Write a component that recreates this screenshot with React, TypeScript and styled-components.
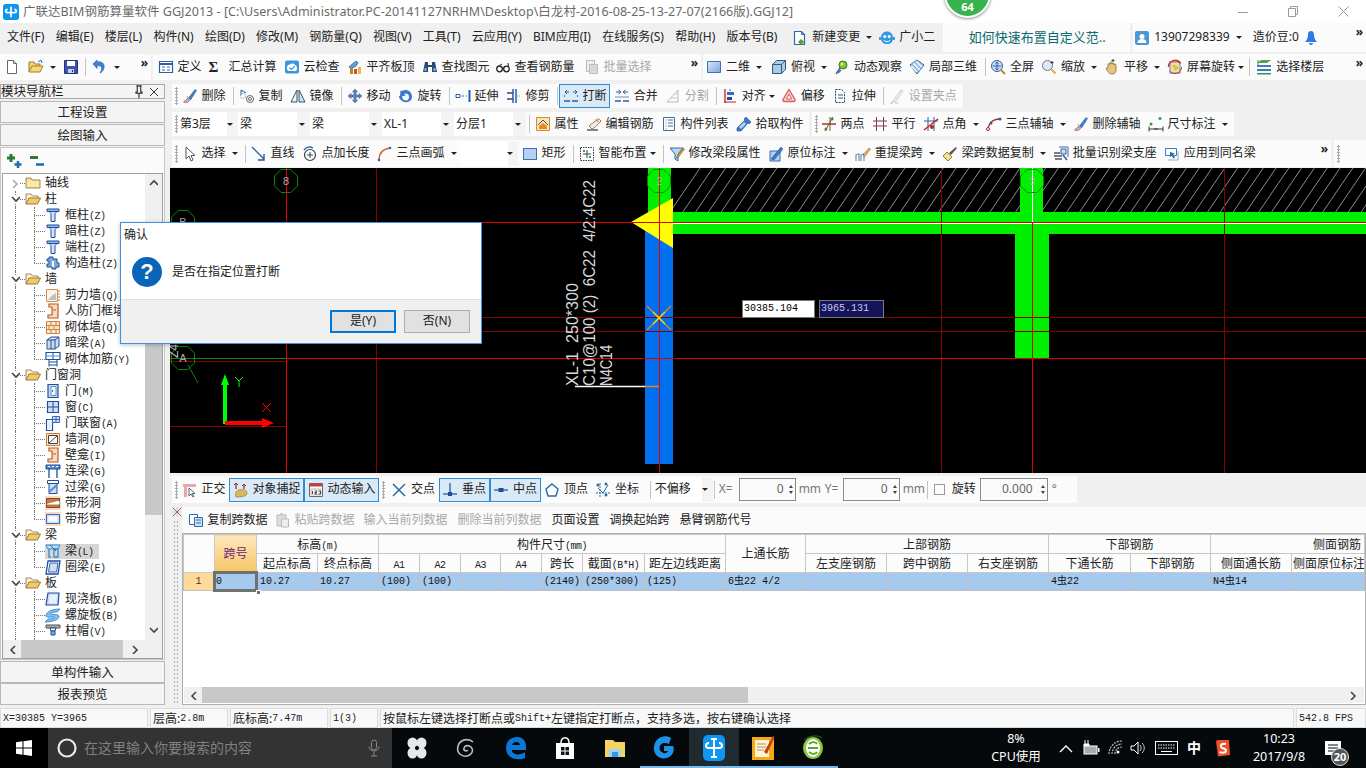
import React from 'react';
import styled, { createGlobalStyle } from 'styled-components';

const SANS = '"Noto Sans","Noto Sans CJK SC",sans-serif';
const MONO = '"Liberation Mono","Noto Sans CJK SC",monospace';

const Global = createGlobalStyle`
  html,body{margin:0;padding:0;overflow:hidden;background:#f0f0f0;}
  #root{width:1366px;height:768px;}
  *{box-sizing:border-box;}
`;

/* ---------- icons ---------- */
const icons: Record<string, React.ReactNode> = {
  new: <><path d="M3.5 1.5h6l3 3v10h-9z" fill="#fff" stroke="#5a6a7a"/><path d="M9.5 1.5v3h3" fill="#dfe6ee" stroke="#5a6a7a"/></>,
  open: <><path d="M1 13V3h5l1 2h5v2" fill="#f2d27a" stroke="#9a7a30"/><path d="M1 13l3-6h11l-3 6z" fill="#f8d874" stroke="#a57f2c"/><path d="M10 3l3-2 1 3" fill="none" stroke="#3a6ec0"/></>,
  save: <><path d="M1.5 1.5h13v13h-13z" fill="#3c52b0" stroke="#23327a"/><path d="M4 2h8v5H4z" fill="#fff"/><path d="M5 10h6v4H5z" fill="#c4cfe8"/><path d="M9 11h1v2H9z" fill="#23327a"/></>,
  undo: <><path d="M5 3C10 2 13 5 12 9c-.5 2.500-2 4-4 5 1-2 2-3.500 1.500-5.500C9 7 7 6.500 5 7v2.500L1 5l4-4z" fill="#3f80d0" stroke="#2a5ea8" strokeWidth=".6"/></>,
  define: <><path d="M1.500 2.500h13v11h-13z" fill="#fff" stroke="#2a5ea8" strokeWidth="1.200"/><path d="M1.500 5h13" stroke="#2a5ea8" strokeWidth="2"/><path d="M4 8h3M4 11h3M9 8h3M9 11h3" stroke="#2a6aa8"/></>,
  cloud: <><rect x="1" y="1.500" width="14" height="13" rx="2" fill="#3c96dc"/><path d="M3 9.500a3 3 0 0 1 3-4c1.500-1.500 4-1.500 5 .5 1.500 0 2 2 2 3.500 0 2-1 2.500-2 2.500H5c-1 0-2-1-2-2.500z" fill="#fff"/><path d="M5.500 8.500l2 2 3.500-3.500" fill="none" stroke="#3c96dc" strokeWidth="1.200"/></>,
  level: <><path d="M2 8l7-6 2 2-2 3-5 2.500z" fill="#6aa0d8" stroke="#3a6ea8"/><path d="M3 9h3v6H3z" fill="#b8862a"/><path d="M7 10h3v5H7z" fill="#d05020"/><path d="M11 8h3v7h-3z" fill="#e8b840"/></>,
  binoc: <><path d="M3 3h3v3h4V3h3l2 10H10V8H6v5H1z" fill="#284878"/><path d="M2.500 9h2v3h-2zM11.500 9h2v3h-2z" fill="#8ab0d8"/></>,
  glasses: <><circle cx="4.500" cy="10" r="2.800" fill="none" stroke="#222" strokeWidth="1.300"/><circle cx="11.500" cy="10" r="2.800" fill="none" stroke="#222" strokeWidth="1.300"/><path d="M7 9h2M13.500 8L13 4M2 8l5-3" fill="none" stroke="#222"/></>,
  batch: <><path d="M2.500 1.500h8v11h-8z" fill="#eee" stroke="#bbb"/><path d="M5.500 5.500h8v9h-8z" fill="#ddd" stroke="#bbb"/><path d="M7 8h5M7 11h5" stroke="#ccc"/></>,
  twoD: <><defs><linearGradient id="bg2d" x1="0" y1="0" x2="1" y2="1"><stop offset="0" stopColor="#dbe8f9"/><stop offset="1" stopColor="#7da6dc"/></linearGradient></defs><path d="M1.500 2.500h13v11h-13z" fill="url(#bg2d)" stroke="#3f6fb8"/></>,
  cube: <><path d="M5.500 1.500h9v9l-4 4h-9v-9z" fill="#a8cce8" stroke="#34577a"/><path d="M1.500 5.500h9v9M10.500 5.500l4-4" fill="none" stroke="#34577a"/></>,
  orbit: <><circle cx="9" cy="6" r="4" fill="#7cc43c" stroke="#3a7a20"/><circle cx="8" cy="5" r="1.500" fill="#e8f060"/><path d="M2 15l4-6M4 14l3-3" stroke="#4a6aa0" strokeWidth="1.500"/></>,
  local3d: <><path d="M8 1l7 5-7 9-7-9z" fill="#9cc4e8" stroke="#3a6a9c"/><path d="M4 4l7 7M7 2l6 6M2 7l6 6" stroke="#fff" strokeWidth="1.200"/></>,
  zfull: <><circle cx="7" cy="7" r="5.500" fill="#c8dcf4" stroke="#3a5f98"/><path d="M7 3v8M3 7h8" stroke="#2a5ea8"/><path d="M5.500 4.500L7 3l1.500 1.500M5.500 9.500L7 11l1.500-1.500" fill="none" stroke="#2a5ea8"/><path d="M11 11l4 4" stroke="#b8862a" strokeWidth="2"/></>,
  zoom: <><circle cx="6.500" cy="6.500" r="5" fill="#dde8f4" stroke="#6a7a8a"/><path d="M10.500 10.500l4 4" stroke="#d8b040" strokeWidth="2"/><path d="M11 2v3M9.500 3.500h3" stroke="#333"/></>,
  pan: <><path d="M4 9V5.500a1 1 0 0 1 2 0V4a1 1 0 0 1 2 0v1a1 1 0 0 1 2 0v1a1 1 0 0 1 2 0v5c0 2-1 4-4 4-2.500 0-3-1-4.500-3L2 10c0-1 1.500-1.500 2-1z" fill="#e8c480" stroke="#8a6a30" strokeWidth=".8"/><path d="M9 0v3M7.500 1.500h3" stroke="#345"/></>,
  srot: <><rect x="3" y="3" width="10" height="11" fill="#dde8a8" stroke="#5a8abc"/><path d="M5 6h4l3 3-4 3z" fill="#f0b840"/><path d="M1.500 8a6.500 6.500 0 0 1 12-3.500" fill="none" stroke="#d83020" strokeWidth="1.500"/><path d="M14.500 8a6.500 6.500 0 0 1-12 3.500" fill="none" stroke="#d83020" strokeWidth="1"/></>,
  floors: <><path d="M1 4l4-3h10l-4 3z" fill="#50a050"/><path d="M1 6h14v2H1z" fill="#4878b8"/><path d="M1 10h14v2H1z" fill="#4878b8"/><path d="M1 14h14v1.500H1z" fill="#2c9a44"/><path d="M2 1v5" stroke="#2c9a44"/></>,
  erase: <><path d="M1.500 14c2 1 5 .5 6-1.500L6 10.500C4 11 3 13 1.500 14z" fill="#d8a8d0" stroke="#805a80" strokeWidth=".7"/><path d="M6.500 10l2 2 6-9.500-1.500-1z" fill="#3f80c8" stroke="#2a5a98" strokeWidth=".6"/><path d="M5 8l1 2" stroke="#c8a040"/></>,
  copy: <><circle cx="11" cy="11" r="3.500" fill="none" stroke="#667" /><circle cx="11" cy="11" r="1.500" fill="none" stroke="#667" /><path d="M2 2l5 3M2 2v5" fill="none" stroke="#4a7ab8" strokeWidth="1.200"/><circle cx="4" cy="8" r="2.500" fill="none" stroke="#99a" strokeDasharray="1.500 1"/></>,
  mirror: <><path d="M7 2v12H1z" fill="#eef4fa" stroke="#356"/><path d="M9 2v12h6z" fill="#cfe0f2" stroke="#356"/></>,
  move: <><path d="M8 1l2.500 3H9v3h3V5.500L15 8l-3 2.500V9H9v3h1.500L8 15l-2.500-3H7V9H4v1.500L1 8l3-2.500V7h3V4H5.500z" fill="#5a86bc" stroke="#2a4e78" strokeWidth=".5"/></>,
  rotb: <><path d="M4 3C8 .5 14 3 14 8.500S8 15.500 4 13c-2-1.500-3-3-3-5h3c0 3 2 4.500 4 4.500S11 11 11 8.500 8 4.500 6 6l2 1.500-6 1 .5-6z" fill="#3a78c8"/></>,
  extend: <><path d="M1 6.500h4v3H1zM7 8h2M11 8h1" stroke="#2a5ea8" fill="#fff"/><path d="M14.500 2v12" stroke="#2a5ea8" strokeWidth="2"/></>,
  trim: <><path d="M7 1v14M10 1v14" stroke="#2a5ea8" strokeWidth="1.500"/><path d="M1 5h6M1 11h6" stroke="#2a4e78" strokeWidth="1.300"/><path d="M10 8h4" stroke="#888" strokeDasharray="2 1"/></>,
  breakb: <><path d="M1 13h6M9 13h6M1 8h1M14 8h1" stroke="#2a5ea8" strokeWidth="1.400"/><path d="M2 4h4M4 2L2 4l2 2M14 4h-4M12 2l2 2-2 2" fill="none" stroke="#2a5ea8"/></>,
  merge: <><path d="M1 13h6M9 13h6" stroke="#2a5ea8" strokeWidth="1.400"/><path d="M2 4h4M4.500 2L7 4 4.500 6M14 4h-4M11.500 2L9 4l2.500 2" fill="none" stroke="#2a5ea8"/><path d="M1 9h14" stroke="#7a8a9a"/></>,
  split: <><path d="M2 14L13 2v12z" fill="none" stroke="#bbb"/><path d="M6 10h7M9 6h4" stroke="#ccc"/></>,
  align: <><path d="M3 1v14" stroke="#c02020" strokeWidth="1.300"/><path d="M2 14h12" stroke="#c02020"/><path d="M5 4h7v3H5z" fill="#3a6ab0"/><path d="M5 9h5v3H5z" fill="#24479a"/><path d="M8 1v2" stroke="#3a6ab0"/></>,
  offset: <><path d="M8 1.500l6 10a1.500 1.500 0 0 1-1 2H3a1.500 1.500 0 0 1-1-2z" fill="#f4d0d0" stroke="#d86060" strokeWidth="1.400"/><path d="M8 6l2.500 5h-5z" fill="#fff" stroke="#d86060"/></>,
  stretch: <><path d="M3.500 1.500h6l3 3v10h-9z" fill="#fff" stroke="#345" strokeDasharray="2 1"/><path d="M6 7h5M6 10h5" stroke="#2a5ea8"/></>,
  clamp: <><path d="M3 14l9-12 2 1-7 10z" fill="#eee" stroke="#ccc"/><path d="M1 15h3M6 15h3" stroke="#bbb"/></>,
  prop: <><path d="M1.500 1.500h13v13h-13z" fill="#fbe4b0" stroke="#d08a30"/><path d="M3 9l5-5 5 5" fill="none" stroke="#2a5e8a"/><path d="M4 10l4-3 4 3v3H4z" fill="#e88a20"/></>,
  edit: <><path d="M1 14h11" stroke="#334" strokeWidth="1.200"/><path d="M3 10l3 3c3-1 5-4 9-8l-2.500-2.500C9 6 5 8 3 10z" fill="#f4ece0" stroke="#8a5a30" strokeWidth=".8"/><path d="M10 3.500l2.500 2.500" stroke="#c05030"/></>,
  list: <><path d="M2.500 1.500h11v13h-11z" fill="#fff" stroke="#446a9a"/><path d="M4.500 4h1M4.500 7h1M4.500 10h1M4.500 13h1M7 4h5M7 7h5M7 10h5" stroke="#446a9a"/></>,
  pick: <><path d="M10 1l5 5-2 2-1-1-7 8-4 0 0-3 8-8-1-1z" fill="#3a78c8" stroke="#1f4e8a" strokeWidth=".6"/><path d="M3 11l5-5 2 2-5 5z" fill="#b8d4f4"/></>,
  two: <><path d="M1 8h14M4 15l8-14M9 1v14" stroke="#7a5a30" fill="none"/><path d="M1 8h14" stroke="#c02020"/><circle cx="5" cy="13" r="1.500" fill="#3a8a3a"/><circle cx="11" cy="3" r="1.500" fill="#3a8a3a"/></>,
  para: <><path d="M4.500 1v14M11.500 1v14" stroke="#2a5ea8"/><path d="M1 5h14M1 10h14" stroke="#c02020"/></>,
  angle: <><path d="M5 1v14M11 1v14M1 5h14" stroke="#2a5ea8"/><path d="M1 14L15 3" stroke="#c02020" strokeWidth="1.500"/><circle cx="9" cy="11" r="2" fill="#c02020"/></>,
  arc3: <><path d="M2 15C2 8 6 3 14 3" fill="none" stroke="#c02020" strokeWidth="1.300"/><circle cx="2" cy="13" r="1.500" fill="#fff" stroke="#c02020"/><circle cx="14" cy="3" r="1.500" fill="#2a5ea8"/><circle cx="5" cy="7" r="1.500" fill="#2a5ea8"/></>,
  dim: <><circle cx="12" cy="2.500" r="1.500" fill="#2c9a44"/><circle cx="3" cy="8" r="1.500" fill="#2c9a44"/><path d="M1 13h14M1 10.500v5M15 10.500v5M6 13h4" stroke="#334" fill="none"/></>,
  cursor: <path d="M4 1l0 12 3-3 2 5 2-1-2-4.500h4z" fill="#fff" stroke="#556"/>,
  line: <><path d="M1 1l12 12" stroke="#2a6aa8" strokeWidth="1.500"/><path d="M13 8v6H7" fill="none" stroke="#1f4e8a" strokeWidth="1.300"/></>,
  plen: <><circle cx="8" cy="9" r="5.500" fill="#fff" stroke="#345" strokeWidth="1.200"/><path d="M8 6v6M5 9h6" stroke="#345"/><path d="M2 4c2-3 6-4 9-2" fill="none" stroke="#2a6aa8" strokeWidth="1.500"/></>,
  arc: <><path d="M2 14C2 7 6 3 13 2" fill="none" stroke="#d86a30" strokeWidth="1.400"/><circle cx="2" cy="14" r="1.300" fill="#2a6aa8"/><circle cx="13" cy="2" r="1.300" fill="#2a6aa8"/></>,
  rect: <rect x="1.500" y="2.500" width="13" height="11" fill="#b8d0f0" stroke="#3f6fb8"/>,
  smart: <><rect x="1.500" y="1.500" width="13" height="13" fill="#fff" stroke="#334" strokeDasharray="1.500 1"/><path d="M8 4v8M4 8h8" stroke="#345"/><path d="M4 4h2v2H4zM10 10h2v2h-2z" fill="#2c9a44"/></>,
  modif: <><path d="M1 2h13L9 8v7l-3-2V8z" fill="#bcd8f4" stroke="#2a6aa8"/><path d="M8 10l6-8 1.500 1-6 8-2 1z" fill="#d8a030" stroke="#7a5a20" strokeWidth=".6"/></>,
  inplace: <><path d="M2 5h10v10H2z" fill="#b8d0f0" stroke="#3a6ab0"/><path d="M3 13L13 1l2 2L6 14z" fill="#3a78c8" stroke="#1f4e8a" strokeWidth=".5"/></>,
  respan: <><path d="M1 15V9l3-1v7M6 15V9l3-1v7" fill="none" stroke="#7a9abc" strokeWidth="1.300"/><path d="M8 9l6-7 1.500 1-6 8z" fill="#e8a860" stroke="#8a5a30" strokeWidth=".5"/></>,
  brush: <><path d="M1 10l5 5 4-4-5-5z" fill="#f0e090" stroke="#9a8030"/><path d="M7 7l2 2 6-7-1-1z" fill="#555"/></>,
  batchid: <><path d="M6 1h9v10" fill="none" stroke="#3a6ab0"/><path d="M8 3h5v5H8z" fill="#d0e0f4" stroke="#2a5ea8"/><path d="M1 7h6M1 10h8M2 13h7" stroke="#556" strokeWidth="1.300"/><path d="M10 9l4 5" stroke="#2a5ea8" strokeWidth="1.500"/></>,
  apply: <><path d="M1.500 2.500h11v7h-11z" fill="#fff" stroke="#3a78c8"/><path d="M6 6l5 1.500-2 1 2 3-1.500 1-2-3-1.500 2z" fill="#2a6aa8"/><path d="M14 5v9H4" fill="none" stroke="#8ab0d8"/></>,
  ortho: <><path d="M1 2h4v13H2V5H1z" fill="#e8a8a8"/><path d="M5 2h9v3H5z" fill="#e8a8a8"/><path d="M7 6l0 8 2-2 2 3 1-.500-2-3h3z" fill="#fff" stroke="#567"/></>,
  snap: <><path d="M3 1v6M11 2v5" stroke="#a03020" strokeWidth="1.300"/><path d="M1 3l2-2 2 2M9 4l2-2 2 2" fill="none" stroke="#a03020"/><path d="M3 15c-1-2-1-6 3-7 4-1 8 0 8 3s-4 4-11 4z" fill="#d8b860" stroke="#8a6a30" strokeWidth=".6"/></>,
  dyn: <><path d="M1.500 1.500h13v13h-13z" fill="#fff" stroke="#667"/><path d="M1.500 1.500h13v3h-13z" fill="#c04040"/><path d="M3 7h10v6H3z" fill="#eee" stroke="#999" strokeWidth=".6"/><path d="M4.500 9v3M7 9l1.500 0 0 1.500-1.500 0 0 1.500 2 0M10.500 9l2 0 0 3-2 0" fill="none" stroke="#222" strokeWidth=".8"/></>,
  cross: <path d="M2 2l12 12M14 2L2 14" stroke="#2a6aa8" strokeWidth="1.500"/>,
  perp: <><path d="M8 1v11" stroke="#2a6aa8" strokeWidth="1.400"/><path d="M1 12h14" stroke="#2a6aa8" strokeWidth="1.400"/><path d="M6 10h4v4H6z" fill="#24479a"/></>,
  mid: <><path d="M1 8h14" stroke="#2a6aa8" strokeWidth="1.400"/><path d="M5.500 6h5v4h-5z" fill="#24479a"/></>,
  vertex: <path d="M8 2l6 5-2 7H4L2 7z" fill="#fff" stroke="#2a6aa8" strokeWidth="1.400"/>,
  coord: <><path d="M5 1v14M1 11h14" stroke="#2a6aa8" strokeDasharray="2 1"/><path d="M3 6l5 5 5-8" fill="none" stroke="#2a6aa8"/><circle cx="3" cy="3" r="1.500" fill="#2a6aa8"/><circle cx="11" cy="2" r="1.500" fill="#2a6aa8"/><circle cx="11" cy="13" r="1.500" fill="#2a6aa8"/></>,
  doc: <><path d="M1.500 2.500h8v10h-8z" fill="#fff" stroke="#2a6aa8"/><path d="M6.500 5.500h8v9h-8z" fill="#cfe2f8" stroke="#2a6aa8"/><path d="M8 8h5M8 11h5" stroke="#2a6aa8"/></>,
  paste: <><path d="M2 3h9v11H2z" fill="#ddd" stroke="#bbb"/><path d="M5 1h3v3H5z" fill="#ccc"/><path d="M6.500 7h7v8h-7z" fill="#eee" stroke="#bbb"/></>,
  pin: <><path d="M5 1h6M6 1v7H4.500v1.500h7V8H10V1M8 9.500V15" fill="none" stroke="#222" strokeWidth="1.200"/></>,
  x: <path d="M4 4l8 8M12 4l-8 8" stroke="#333"/>,
  redx: <><path d="M1 1l14 14M15 1L1 15" stroke="#a05050" strokeWidth="1.500"/><path d="M8 1v14M1 8h14" stroke="#888" strokeDasharray="1.500 1.500"/></>,
  folder: <><path d="M1 13V3h5l1.500 2H15v8z" fill="#f6d984" stroke="#a08a5a"/><path d="M2 6h12v6H2z" fill="#fce9a8"/></>,
  folderOpen: <><path d="M1 13V3h5l1.500 2H13v2" fill="#fff2c8" stroke="#a08a5a"/><path d="M1 13l3-6h11.500l-3 6z" fill="#f2ca60" stroke="#96794a"/></>,
  col: <><path d="M2 2h12v2.500H2z" fill="#8ab8ea" stroke="#1f4e9a"/><path d="M4 4.500h8l-2 2v8H6v-8z" fill="#d4e6fa" stroke="#1f4e9a"/></>,
  gz: <><path d="M4 2h4v2h4v4h2v4h-3v2H7v-2H2V9h2V6H2V4h2z" fill="#7ea8dc" stroke="#1f4e9a"/><path d="M7 6h2v6H7z" fill="#fff"/></>,
  shear: <><path d="M1.500 2.500h11v12h-11z" fill="#fff2e2" stroke="#d09060"/><path d="M3 13c2-3 4-5 8-7v7z" fill="#b8c4cc"/><path d="M13 4h2M13 7h2M13 10h2M13 13h2" stroke="#d07030"/></>,
  door2: <><path d="M4 1h9v14H3v-3h4V4H4z" fill="#f8dcbc" stroke="#b85a20" strokeWidth="1.200"/><path d="M8 7h3" stroke="#b85a20"/></>,
  brick: <><path d="M1.500 2.500h13v12h-13z" fill="#fde6cc" stroke="#d08040"/><path d="M1.500 6.500h13M1.500 10.500h13M6 2.500v4M11 2.500v4M4 6.500v4M9 6.500v4M6 10.500v4M11 10.500v4" stroke="#d08040"/></>,
  dbeam: <><path d="M2 5l4-3h8v9l-4 3H2z" fill="#c8dcf4" stroke="#274f8c"/><path d="M2 5h8v9M10 5l4-3M6 5v9" fill="none" stroke="#274f8c"/></>,
  rwall: <><path d="M1 1.500h14v7H1z" fill="#fff" stroke="#1f4e9a" strokeWidth="1.200"/><path d="M4 8.500v7M12 8.500v7M4 11h8M4 14h8M8 1.500v7" stroke="#1f4e9a"/><path d="M1 5h14" stroke="#5a8ad0"/></>,
  door: <><path d="M3 1.500h10v13H3z" fill="#c8dcf4" stroke="#1f4e9a" strokeWidth="1.200"/><path d="M6 3.500h5v9H6z" fill="#f0f6fe" stroke="#6a90c8"/><path d="M7 8h1" stroke="#1f4e9a" strokeWidth="1.400"/></>,
  win: <><path d="M2.500 2.500h11v11h-11z" fill="#cfe0f6" stroke="#1f4e9a" strokeWidth="1.200"/><path d="M8 2.500v11M2.500 8h11" stroke="#1f4e9a"/></>,
  dw: <><path d="M1.500 4.500h6v11h-6z" fill="#fff" stroke="#1f4e9a" strokeWidth="1.200"/><path d="M3.500 6h2v8h-2z" fill="#d4e4f8"/><path d="M7.500 1.500h7v6h-7z" fill="#cfe0f6" stroke="#3a6ab0"/><path d="M11 1.500v6M7.500 4.500h7" stroke="#3a6ab0"/></>,
  hole: <><path d="M1.500 2.500h13v12h-13z" fill="#fde6cc" stroke="#c87a3a"/><path d="M3.500 4.500h9v8h-9z" fill="#fff" stroke="#444"/><path d="M4 12L12 5" stroke="#444"/></>,
  lbeam: <><path d="M1 2h14v4H1z" fill="#5a8ad0" stroke="#1f4e9a"/><path d="M3 3.500h2M7 3.500h2M11 3.500h2" stroke="#fff"/><path d="M4 6v9M12 6v9" stroke="#1f4e9a" strokeWidth="1.300"/></>,
  lintel: <><path d="M2.500 1.500h11v3h-11z" fill="#fff" stroke="#1f4e9a"/><path d="M4 4.500h8v10H4z" fill="#cfe0f6" stroke="#1f4e9a"/><path d="M4 13l8-7" stroke="#5a8ad0" strokeWidth="2"/></>,
  stripH: <><path d="M0 1h16v14H0z" fill="#f8dcc8"/><path d="M1.500 3.500h13v9h-13z" fill="#c07840" stroke="#7a4a2a"/><path d="M1.500 9C6 8 10 6 14.500 6v3.500H1.500z" fill="#fff"/></>,
  stripW: <><path d="M0 1h16v14H0z" fill="#f8dcc8"/><path d="M1.500 3.500h13v9h-13z" fill="#cfe0f6" stroke="#3a6ab0"/><path d="M3.500 5.500h9v5h-9z" fill="#fff"/></>,
  beam: <><path d="M1 2h14l-2 4H3z" fill="#bcdcf4" stroke="#3a8ac8"/><path d="M4 6v8h2M9 6h4v8H9z" fill="none" stroke="#3a8ac8" strokeWidth="1.300"/><path d="M5 2l6 6" stroke="#1f6aa8"/></>,
  ring: <><path d="M3 2h12l-2 13H1z" fill="#fff" stroke="#1f4e9a" strokeWidth="1.300"/><path d="M5 4h8l-1.500 9H3.500z" fill="#cfe0f6" stroke="#3a6ab0"/></>,
  slab: <><path d="M3 2h11l-1 12H1z" fill="#cfe0f6" stroke="#1f4e9a" strokeWidth="1.200"/><path d="M5 4h7l-1 8H4z" fill="#eaf2fc"/></>,
  spiral: <path d="M1 8c1-4 8-6 14-6l-3 3C9 5 5 6 6 7c3 1 9 0 8 3-1 3-8 5-14 5l3-3c3 0 7-1 6-2-3 0-9 1-8-2z" fill="#7cc0f0" stroke="#2a7ac0" strokeWidth=".8"/>,
  cap: <><path d="M1 2h14v3H1z" fill="#aaa" stroke="#555"/><path d="M5 5h6l-1 3H6z" fill="#fff" stroke="#1f4e9a"/><path d="M6 8h4v4H6z" fill="#7ea8dc" stroke="#1f4e9a"/></>,
  addT: <><path d="M5 1v8M1 5h8" stroke="#2c7a34" strokeWidth="3"/><path d="M12 8v7M8.500 11.500h7" stroke="#1f6aa8" strokeWidth="2.500"/></>,
  delT: <><path d="M1 4.500h8" stroke="#2c7a34" strokeWidth="3"/><path d="M7 11.500h8" stroke="#1f6aa8" strokeWidth="2.500"/></>,
  user: <><rect x="1" y="1" width="14" height="14" rx="2" fill="#4a98d8"/><circle cx="8" cy="6.500" r="2.500" fill="#fff"/><path d="M3.500 13c0-3 2-4 4.500-4s4.500 1 4.500 4z" fill="#fff"/></>,
  bell: <><path d="M8 1c-1.500 0-3 1-3 3.500C5 8 4 10 2 12h12c-2-2-3-4-3-7.500C11 2 9.500 1 8 1z" fill="#2c7ae0"/><path d="M6 13h4a2 2 0 0 1-4 0z" fill="#2c7ae0"/></>,
  change: <><path d="M2.500 1.500h7l3 3v10h-10z" fill="#fff" stroke="#2a6aa8" strokeWidth="1.200"/><path d="M9.500 1.500v3h3" fill="none" stroke="#2a6aa8"/><path d="M9 9l3.500 3-3.500 3-3-3z" fill="#58a030"/></>,
  robot: <><path d="M2 8c0-4 2.500-6.500 6-6.500S14 4 14 8c0 4-2.500 6-6 6s-6-2-6-6z" fill="#2e9ae8"/><circle cx="5.800" cy="6.500" r="1.500" fill="#fff"/><circle cx="10.200" cy="6.500" r="1.500" fill="#fff"/><path d="M5 10.500c1.500 1.500 4.500 1.500 6 0" fill="none" stroke="#fff"/><path d="M1 7v3M15 7v3" stroke="#1f7ac0" strokeWidth="1.500"/></>,
};
const Svg = styled.svg`flex:none;display:block;`;
const Ico: React.FC<{ n: string; s?: number }> = ({ n, s = 16 }) => (
  <Svg width={s} height={s} viewBox="0 0 16 16">{icons[n]}</Svg>
);

/* ---------- frame ---------- */
const Page = styled.div`
  position:relative;width:1366px;height:768px;overflow:hidden;background:#f0f0f0;
  display:flex;flex-direction:column;font:12px/1.2 ${SANS};color:#222;
`;
const TitleBar = styled.div`
  height:23px;background:#fff;display:flex;align-items:center;padding-left:3px;gap:4px;color:#6a6a6a;font-size:12.500px;white-space:nowrap;flex:none;
`;
const TitleText = styled.span`flex:1;letter-spacing:.03px;`;
const WinCtl = styled.span`width:46px;height:23px;display:flex;align-items:center;justify-content:center;flex:none;`;
const Badge = styled.div`
  position:absolute;left:944px;top:-30px;width:47px;height:48px;border-radius:50%;background:#36b24e;border:2px solid #fff;
  box-shadow:0 1px 3px rgba(0,0,0,.45);color:#fff;font-weight:700;font-size:11px;display:flex;align-items:flex-end;justify-content:center;padding-bottom:3px;
`;
const MenuBar = styled.div`height:29px;display:flex;align-items:center;flex:none;padding-left:7px;`;
const MenuItem = styled.span`margin-right:11.200px;white-space:nowrap;&:last-of-type{margin-right:2px;}`;
const Tip = styled.div`
  width:187px;height:29px;background:#fbfbfb;color:#0a6a70;margin:0 3px 0 4px;display:flex;align-items:center;padding-left:26px;font-size:13px;
`;
const UserBox = styled.div`flex:1;height:29px;background:#fbfbfb;display:flex;align-items:center;`;
const Bar = styled.div<{ $w?: number; $h?: number; $ml?: number }>`
  display:flex;align-items:center;height:${p => p.$h ?? 24}px;flex:none;
  ${p => (p.$w ? `width:${p.$w}px;` : 'flex:1;')}
  margin-left:${p => p.$ml ?? 0}px;background:#fbfbfb;white-space:nowrap;
`;
const TopBar = styled.div`height:32px;display:flex;align-items:flex-start;padding-top:2px;flex:none;`;
const Tool = styled.span<{ $on?: boolean; $dis?: boolean; $ml?: number; $h?: number }>`
  display:inline-flex;align-items:center;gap:4px;padding:0 3.500px;height:${p => p.$h ?? 24}px;flex:none;
  margin-left:${p => p.$ml ?? 0}px;
  color:${p => (p.$dis ? '#a8a8a8' : '#222')};
  ${p => (p.$on ? 'background:#d9e9f6;box-shadow:inset 0 0 0 1px #2f8bd4;' : '')}
`;
const Caret = styled.span`width:0;height:0;border:3px solid transparent;border-top:3.500px solid #222;border-bottom:0;margin:0 0 0 2px;flex:none;`;
const SoftCaret = styled(Caret)`margin:0 0 0 -1px;`;
const Sep = styled.span<{ $l?: number; $r?: number }>`width:1px;height:18px;background:#c4c4c4;flex:none;margin:0 ${p => p.$r ?? 1}px 0 ${p => p.$l ?? 4}px;`;
const Grip = styled.span`
  width:3px;height:18px;flex:none;margin:0 0 0 3px;
  background-image:radial-gradient(#aaa 50%,transparent 55%);background-size:3px 3px;
`;
const More = styled.span`margin-left:auto;margin-right:3px;font-weight:700;font-size:12px;line-height:10px;align-self:flex-start;padding-top:4px;`;
const Combo = styled.span<{ $w: number }>`
  width:${p => p.$w}px;height:24px;display:flex;align-items:center;justify-content:space-between;flex:none;padding:0 5px 0 2px;
  background:linear-gradient(90deg,#fff 0,#fff 82%,#f4f4f4 82%);
`;
const Body = styled.div`height:624px;display:flex;flex:none;`;

/* ---------- left panel ---------- */
const Left = styled.div`width:165px;flex:none;display:flex;flex-direction:column;padding-bottom:3px;`;
const PanelHead = styled.div`
  height:15px;border:1px solid #a8a8a8;background:#f4f4f4;display:flex;align-items:center;font-size:12.500px;padding-right:2px;margin-bottom:1px;line-height:12px;
`;
const HeadLabel = styled.span`flex:1;`;
const NavBtn = styled.div<{ $mt?: number }>`
  height:22px;border:1px solid #b8b8b8;background:#f4f4f4;display:flex;align-items:center;justify-content:center;margin-top:${p => p.$mt ?? 1}px;font-size:12.500px;flex:none;
`;
const Tree = styled.div`
  flex:1;min-height:0;margin:1px 0 0;border:1px solid #c8c8c8;background:#fbfbfb;display:flex;flex-direction:column;padding:0 1px;
`;
const TreeTools = styled.div`height:25px;display:flex;align-items:center;gap:7px;padding-left:4px;flex:none;`;
const TreeFrame = styled.div`
  flex:1;min-height:0;border:1px solid #a0a0a0;background:#fff;display:grid;grid-template-columns:1fr 17px;grid-template-rows:1fr 18px;
`;
const TreeBody = styled.div`overflow:hidden;padding-top:1px;`;
const VBar = styled.div`background:#f0f0f0;display:flex;flex-direction:column;align-items:center;padding-top:5px;position:relative;`;
const VThumb = styled.div`position:absolute;left:0;right:0;top:51px;bottom:125px;background:#c8c8c8;`;
const Dn = styled.span`position:absolute;bottom:5px;left:4px;`;
const HBar = styled.div`background:#f0f0f0;display:flex;align-items:center;padding:0 5px 0 6px;`;
const HCorner = styled.div`background:#f0f0f0;`;
const HThumb = styled.div`position:absolute;left:3px;width:102px;top:0;bottom:0;background:#c8c8c8;`;
const HTrack = styled.div`position:relative;flex:1;height:100%;`;
const TreeRow = styled.div<{ $child?: boolean; $last?: boolean; $first?: boolean }>`
  height:16px;position:relative;display:flex;align-items:center;padding-left:${p => (p.$child ? 31 : 8)}px;white-space:nowrap;
  &::before{content:'';position:absolute;left:12px;top:0;bottom:0;border-left:1px dotted ${p => (p.$first ? 'transparent' : '#777')};}
  &::after{content:'';position:absolute;left:31px;top:0;height:${p => (p.$last ? '50%' : p.$child ? '100%' : '0')};border-left:1px dotted #777;}
`;
const Dots = styled.span<{ $w: number }>`width:${p => p.$w}px;border-top:1px dotted #777;flex:none;`;
const Chev = styled.span`width:9px;flex:none;display:flex;background:#fff;position:relative;z-index:1;`;
const TreeLabel = styled.span<{ $sel?: boolean }>`
  display:flex;align-items:center;gap:4px;height:15px;padding-right:5px;
  ${p => (p.$sel ? 'background:#d6d6d6;' : '')}
`;
const Key = styled.span`font:10px ${MONO};letter-spacing:-.5px;`;

/* ---------- right ---------- */
const Right = styled.div`width:1196px;margin-left:5px;flex:none;display:flex;flex-direction:column;`;
const Rows = styled.div`display:flex;margin-top:4px;flex:none;`;
const Canvas = styled.div`position:relative;height:305px;background:#000;flex:none;margin-top:1px;`;
const CoordBox = styled.div<{ $x: number; $w: number; $dark?: boolean }>`
  position:absolute;left:${p => p.$x}px;top:132px;width:${p => p.$w}px;height:18px;border:1px solid #777;
  background:${p => (p.$dark ? '#14145a' : '#fff')};color:${p => (p.$dark ? '#c8c8f0' : '#000')};font:10px/16px ${MONO};padding-left:1px;
`;
const SnapWrap = styled.div`height:34px;padding-top:3px;flex:none;`;
const Num = styled.span<{ $w: number; $ml?: number }>`
  width:${p => p.$w}px;height:23px;border:1px solid #8a8a8a;background:#fbfbfb;color:#666;display:flex;align-items:center;justify-content:flex-end;flex:none;padding-right:2px;gap:5px;font-size:12px;margin-left:${p => p.$ml ?? 0}px;
`;
const NumOff = styled.span`margin-right:3px;`;
const Spin = styled.span`display:flex;flex-direction:column;gap:3px;`;
const SpinUp = styled.span`width:0;height:0;border:2.500px solid transparent;border-bottom:3px solid #444;border-top:0;`;
const SpinDown = styled.span`width:0;height:0;border:2.500px solid transparent;border-top:3px solid #444;border-bottom:0;`;
const Muted = styled.span<{ $w?: number; $ml?: number }>`color:#777;width:${p => (p.$w ? `${p.$w}px` : 'auto')};margin-left:${p => p.$ml ?? 0}px;flex:none;`;
const Check = styled.span`width:11px;height:11px;border:1px solid #999;background:#fbfbfb;flex:none;margin:0 7px 0 3px;`;
const Lower = styled.div`display:flex;flex:1;min-height:0;padding-bottom:3px;`;
const GripCol = styled.div`width:12px;flex:none;position:relative;padding-left:2px;
  &::after{content:'';position:absolute;left:3px;top:13px;width:6px;bottom:0;background-image:radial-gradient(#b0b0b0 45%,transparent 50%);background-size:3px 4px;}
`;
const CloseBox = styled.span`width:10px;height:10px;display:block;`;
const GridArea = styled.div`flex:1;display:flex;flex-direction:column;min-width:0;`;
const GridTools = styled.div`height:26px;background:#fbfbfb;display:flex;align-items:center;padding-left:2px;flex:none;white-space:nowrap;`;
const GridWrap = styled.div`flex:1;min-height:0;background:#fff;border:1px solid #b0b0b0;display:flex;flex-direction:column;`;
const TableBox = styled.div`flex:1;overflow:hidden;`;
const Table = styled.table`border-collapse:collapse;table-layout:fixed;width:1181px;`;
const Col = styled.col<{ $w: number }>`width:${p => p.$w}px;`;
const Th = styled.th<{ $hi?: boolean; $pl?: number }>`
  font-weight:400;font-size:12px;height:19px;line-height:15px;padding:0 ${p => (p.$pl ? '0' : '1px')} 0 ${p => p.$pl ?? 1}px;border:1px solid #c8c8c8;white-space:nowrap;overflow:hidden;
  text-align:${p => (p.$pl ? 'left' : 'center')};
  background:${p => (p.$hi ? 'linear-gradient(#fde8bc,#f5c768)' : '#fcfcfc')};color:${p => (p.$hi ? '#6a1a7a' : '#222')};
`;
const Td = styled.td<{ $num?: boolean }>`
  height:18px;padding:0 2px;border:1px solid #c0c0c0;background:${p => (p.$num ? '#fdd99a' : '#a6c9ee')};color:${p => (p.$num ? '#7a2020' : '#111')};
  font:10px/14px ${MONO};white-space:nowrap;overflow:hidden;text-align:${p => (p.$num ? 'center' : 'left')};
`;
const CurTd = styled(Td)`border:3px solid #707070;padding:0;position:relative;overflow:visible;`;
const Handle = styled.span`position:absolute;right:-6px;bottom:-6px;width:5px;height:5px;background:#707070;border:1px solid #fff;`;
const GridScroll = styled.div`height:16px;background:#f0f0f0;margin:0 1px 1px;flex:none;display:flex;align-items:center;position:relative;padding:0 6px;justify-content:space-between;`;
const GridThumb = styled.div`position:absolute;left:18px;width:546px;top:0;bottom:0;background:#c8c8c8;`;

/* ---------- status ---------- */
const Status = styled.div`height:20px;display:flex;gap:2px;flex:none;`;
const StatusCell = styled.div<{ $w?: number }>`
  ${p => (p.$w ? `width:${p.$w}px;flex:none;` : 'flex:1;')}
  background:#f8f8f8;border:1px solid #dcdcdc;display:flex;align-items:center;padding-left:2px;font:10px ${MONO};white-space:nowrap;
`;
const Cjk = styled.span`font:12px ${SANS};`;

/* ---------- taskbar ---------- */
const Taskbar = styled.div`height:40px;background:#05090c;display:flex;flex:none;color:#fff;`;
const StartBtn = styled.div`width:48px;background:#000;display:flex;align-items:center;justify-content:center;flex:none;`;
const Search = styled.div`width:344px;background:#333;display:flex;align-items:center;padding:0 11px 0 9px;gap:7px;color:#808080;font-size:14px;flex:none;`;
const SearchText = styled.span`flex:1;`;
const TaskItem = styled.div<{ $open?: boolean; $act?: boolean }>`
  width:49.500px;display:flex;align-items:center;justify-content:center;flex:none;position:relative;
  ${p => (p.$act ? 'background:#1f2a31;' : '')}
  ${p => (p.$open ? 'box-shadow:inset 0 -2px 0 #76b9ed;' : '')}
`;
const Tray = styled.div`margin-left:auto;display:flex;align-items:center;`;
const CpuBox = styled.div`width:52px;text-align:center;font-size:12.500px;line-height:18px;margin-right:12px;`;
const TrayIcon = styled.span<{ $w: number }>`width:${p => p.$w}px;display:flex;justify-content:center;align-items:center;flex:none;`;
const ZhText = styled.span`font-size:14px;font-weight:700;`;
const Clock = styled.div`width:58px;text-align:center;font-size:12.500px;line-height:18px;margin:0 17px 0 8px;`;
const Notify = styled.div`width:41px;height:40px;position:relative;display:flex;align-items:flex-start;padding-top:13px;flex:none;`;
const NotifyBadge = styled.span`position:absolute;left:6px;top:20px;width:18px;height:18px;border-radius:50%;background:#555;border:1px solid #ddd;font-weight:700;font-size:11px;line-height:16px;text-align:center;`;

/* ---------- dialog ---------- */
const Dialog = styled.div`position:absolute;left:120px;top:222px;width:362px;height:122px;border:1px solid #3d8fe0;background:#fff;display:flex;flex-direction:column;box-shadow:0 1px 4px rgba(0,0,0,.25);`;
const DlgTitle = styled.div`height:22px;padding:5px 0 0 3px;font-size:12px;line-height:14px;flex:none;`;
const DlgMain = styled.div`flex:1;display:flex;align-items:center;padding:0 0 0 11px;gap:10px;font-size:12px;`;
const DlgFoot = styled.div`height:44px;background:#f0f0f0;border-top:1px solid #dfdfdf;display:flex;justify-content:flex-end;align-items:center;gap:8px;padding-right:11px;flex:none;`;
const DlgBtn = styled.div<{ $def?: boolean }>`
  width:66px;height:23px;display:flex;align-items:center;justify-content:center;background:#e1e1e1;
  border:${p => (p.$def ? '2px solid #0078d7' : '1px solid #adadad')};
`;
const QMark = styled.text`font:700 22px "Liberation Sans",sans-serif;fill:#fff;`;
const SigmaGlyph = styled.span`font:700 15px "Liberation Serif",serif;width:16px;text-align:left;flex:none;`;

/* ---------- data ---------- */
type T = { i?: string; t?: string; dis?: boolean; on?: boolean; c?: boolean; sc?: boolean; sep?: boolean; ml?: number; sl?: number };
const ToolRun: React.FC<{ items: T[]; h?: number }> = ({ items, h }) => (
  <>
    {items.map((it, k) =>
      it.sep ? <Sep key={k} $l={it.sl} /> : (
        <Tool key={k} $on={it.on} $dis={it.dis} $ml={it.ml} $h={h}>
          {it.i && <Ico n={it.i} />}
          {it.t && <span>{it.t}</span>}
          {it.c && <Caret />}
          {it.sc && <SoftCaret />}
        </Tool>
      ))}
  </>
);

const menus = ['文件(F)', '编辑(E)', '楼层(L)', '构件(N)', '绘图(D)', '修改(M)', '钢筋量(Q)', '视图(V)', '工具(T)', '云应用(Y)', 'BIM应用(I)', '在线服务(S)', '帮助(H)', '版本号(B)'];

const top2: T[] = [{ i: 'cloud', t: '云检查' }, { i: 'level', t: '平齐板顶' }, { i: 'binoc', t: '查找图元' }, { i: 'glasses', t: '查看钢筋量', ml: -2 }, { i: 'batch', t: '批量选择', ml: 2, dis: true }];
const top3: T[] = [
  { i: 'twoD', t: '二维', ml: -.5 }, { c: true, ml: -3 }, { i: 'cube', t: '俯视', c: true, ml: 2 }, { i: 'orbit', t: '动态观察' }, { i: 'local3d', t: '局部三维' }, { sep: true }, { i: 'zfull', t: '全屏' }, { i: 'zoom', t: '缩放', c: true }, { i: 'pan', t: '平移', c: true }, { i: 'srot', t: '屏幕旋转', sc: true }, { sep: true, sl: 1 }, { i: 'floors', t: '选择楼层', ml: 2 },
];
const row1: T[] = [
  { i: 'erase', t: '删除' }, { sep: true }, { i: 'copy', t: '复制' }, { i: 'mirror', t: '镜像' }, { sep: true }, { i: 'move', t: '移动' }, { i: 'rotb', t: '旋转' }, { sep: true }, { i: 'extend', t: '延伸' }, { i: 'trim', t: '修剪' }, { sep: true }, { i: 'breakb', t: '打断', on: true }, { i: 'merge', t: '合并' }, { i: 'split', t: '分割', dis: true }, { sep: true }, { i: 'align', t: '对齐', sc: true }, { i: 'offset', t: '偏移', ml: -1 }, { i: 'stretch', t: '拉伸' }, { sep: true }, { i: 'clamp', t: '设置夹点', dis: true },
];
const row2a: T[] = [{ i: 'prop', t: '属性' }, { i: 'edit', t: '编辑钢筋' }, { i: 'list', t: '构件列表' }, { i: 'pick', t: '拾取构件' }];
const row2b: T[] = [{ i: 'two', t: '两点', ml: -1 }, { i: 'para', t: '平行' }, { i: 'angle', t: '点角', c: true }, { i: 'arc3', t: '三点辅轴', c: true }, { i: 'erase', t: '删除辅轴' }, { i: 'dim', t: '尺寸标注', c: true }];
const row3a: T[] = [{ i: 'cursor', t: '选择', c: true }, { sep: true }, { i: 'line', t: '直线' }, { i: 'plen', t: '点加长度' }, { i: 'arc', t: '三点画弧', c: true }];
const row3b: T[] = [{ i: 'rect', t: '矩形' }, { sep: true }, { i: 'smart', t: '智能布置', sc: true }, { sep: true }, { i: 'modif', t: '修改梁段属性' }, { i: 'inplace', t: '原位标注', c: true }, { i: 'respan', t: '重提梁跨', c: true }, { i: 'brush', t: '梁跨数据复制', c: true }, { i: 'batchid', t: '批量识别梁支座' }, { i: 'apply', t: '应用到同名梁' }];
const snap1: T[] = [{ i: 'ortho', t: '正交' }, { i: 'snap', t: '对象捕捉', on: true }, { i: 'dyn', t: '动态输入', on: true }];
const snap2: T[] = [{ i: 'cross', t: '交点', ml: 2.500 }, { i: 'perp', t: '垂点', on: true }, { i: 'mid', t: '中点', on: true }, { i: 'vertex', t: '顶点' }, { i: 'coord', t: '坐标' }];

type N = { t: string; k?: string; i?: string; sel?: boolean };
const tree: { t: string; open: boolean; kids: N[] }[] = [
  { t: '轴线', open: false, kids: [] },
  { t: '柱', open: true, kids: [{ t: '框柱', k: 'Z', i: 'col' }, { t: '暗柱', k: 'Z', i: 'col' }, { t: '端柱', k: 'Z', i: 'col' }, { t: '构造柱', k: 'Z', i: 'gz' }] },
  { t: '墙', open: true, kids: [{ t: '剪力墙', k: 'Q', i: 'shear' }, { t: '人防门框墙', k: 'RF', i: 'door2' }, { t: '砌体墙', k: 'Q', i: 'brick' }, { t: '暗梁', k: 'A', i: 'dbeam' }, { t: '砌体加筋', k: 'Y', i: 'rwall' }] },
  { t: '门窗洞', open: true, kids: [{ t: '门', k: 'M', i: 'door' }, { t: '窗', k: 'C', i: 'win' }, { t: '门联窗', k: 'A', i: 'dw' }, { t: '墙洞', k: 'D', i: 'hole' }, { t: '壁龛', k: 'I', i: 'door2' }, { t: '连梁', k: 'G', i: 'lbeam' }, { t: '过梁', k: 'G', i: 'lintel' }, { t: '带形洞', i: 'stripH' }, { t: '带形窗', i: 'stripW' }] },
  { t: '梁', open: true, kids: [{ t: '梁', k: 'L', i: 'beam', sel: true }, { t: '圈梁', k: 'E', i: 'ring' }] },
  { t: '板', open: true, kids: [{ t: '现浇板', k: 'B', i: 'slab' }, { t: '螺旋板', k: 'B', i: 'spiral' }, { t: '柱帽', k: 'V', i: 'cap' }, { t: '板洞', k: 'N', i: 'slab' }] },
];

const colW = [31, 42, 61, 61, 41, 41, 40, 41, 41, 62, 81, 80, 81, 81, 81, 82, 80, 81, 73];
const row = ['10.27', '10.27', '(100)', '(100)', '', '', '(2140)', '(250*300)', '(125)', '6虫22 4/2', '', '', '', '4虫22', '', 'N4虫14', ''];

const ChevSvg: React.FC<{ d: 'u' | 'd' | 'l' | 'r'; c?: string }> = ({ d, c = '#444' }) => {
  const p = { u: 'M1 6l4-4 4 4', d: 'M1 2l4 4 4-4', l: 'M6 1L2 5l4 4', r: 'M2 1l4 4-4 4' }[d];
  return <Svg width="9" height="9" viewBox="0 0 9 9"><path d={p} fill="none" stroke={c} strokeWidth="1.600" /></Svg>;
};

const Spinner = () => <Spin><SpinUp /><SpinDown /></Spin>;

const AxisMark: React.FC<{ x: number; y: number; t: string }> = ({ x, y, t }) => {
  const pts = Array.from({ length: 8 }, (_, i) => {
    const a = (i / 8) * Math.PI * 2 + Math.PI / 8;
    return `${x + 12.500 * Math.cos(a)},${y + 12.500 * Math.sin(a)}`;
  }).join(' ');
  return (
    <g>
      <polygon points={pts} fill="none" stroke="#0a8a0a" />
      <text x={x} y={y + 4} textAnchor="middle" fontFamily="Liberation Sans" fontSize="11" fill="#a8a8a8">{t}</text>
    </g>
  );
};

const hatch = Array.from({ length: 58 }, (_, i) => {
  const x = 670 + i * 12.800;
  return <line key={i} x1={x} y1={212} x2={x + 30} y2={168} stroke="#c8c8c8" strokeWidth=".7" />;
});

const Cad = () => (
  <Svg width="1196" height="305" viewBox="170 168 1196 305">
    {hatch}
    <rect x="648" y="168" width="23" height="46" fill="#00f000" />
    <rect x="673" y="212" width="693" height="22" fill="#00f000" />
    <rect x="1020" y="168" width="23" height="44" fill="#00f000" />
    <rect x="1015" y="234" width="34" height="124" fill="#00f000" />
    <rect x="645" y="225" width="28" height="239" fill="#0070f0" />
    <g shapeRendering="crispEdges">
      <line x1="376.500" y1="168" x2="376.500" y2="473" stroke="#8a0000" />
      <line x1="941.500" y1="168" x2="941.500" y2="473" stroke="#8a0000" />
      <line x1="1224.500" y1="168" x2="1224.500" y2="473" stroke="#8a0000" />
      <line x1="170" y1="317.500" x2="1366" y2="317.500" stroke="#8a0000" />
      <line x1="170" y1="331.500" x2="1366" y2="331.500" stroke="#8a0000" />
      <line x1="170" y1="426.500" x2="286" y2="426.500" stroke="#8a0000" />
      <line x1="170" y1="361.500" x2="286" y2="361.500" stroke="#8a0000" />
      <line x1="170" y1="358.500" x2="286" y2="358.500" stroke="#0a8a0a" />
      <line x1="286.500" y1="168" x2="286.500" y2="473" stroke="#e00000" />
      <line x1="170" y1="222.500" x2="1366" y2="222.500" stroke="#e00000" />
      <line x1="673" y1="223.500" x2="1366" y2="223.500" stroke="#fff" />
      <line x1="659.500" y1="168" x2="659.500" y2="473" stroke="#e00000" />
      <line x1="1032.500" y1="168" x2="1032.500" y2="473" stroke="#e00000" />
      <line x1="1032.500" y1="168" x2="1032.500" y2="222" stroke="#fff" />
      <line x1="286" y1="358.500" x2="1366" y2="358.500" stroke="#e00000" />
    </g>
    <polygon points="631,222 673,198 673,248" fill="#ffff00" />
    <line x1="631" y1="222.500" x2="673" y2="222.500" stroke="#e00000" />
    <line x1="659.500" y1="198" x2="659.500" y2="248" stroke="#e00000" />
    <path d="M647 306l24 24M671 306l-24 24" stroke="#f08020" strokeWidth="1.200" />
    <path d="M653 312l12 12M665 312l-12 12" stroke="#f0e000" strokeWidth="1.200" />
    <AxisMark x={286} y={181} t="8" />
    <AxisMark x={659} y={181} t="2" />
    <AxisMark x={1032} y={181} t="3" />
    <AxisMark x={183} y={222} t="B" />
    <AxisMark x={183} y={358} t="A" />
    <line x1="188" y1="365" x2="198" y2="383" stroke="#0a8a0a" />
    <text transform="translate(178 358) rotate(-90)" fontFamily="Liberation Sans" fontSize="12" fill="#bbb">Z4</text>
    <rect x="223" y="380" width="4" height="44" fill="#00ff00" />
    <polygon points="225,374 221,385 229,385" fill="#00ff00" />
    <rect x="225" y="421" width="40" height="4" fill="#ff0000" />
    <polygon points="274,423 262,418 262,428" fill="#ff0000" />
    <path d="M235 377l4 4 4-4M239 381v6" fill="none" stroke="#00ff00" />
    <path d="M262 403l9 9M271 403l-9 9" fill="none" stroke="#ff0000" />
    <g fontFamily="Liberation Sans" fontSize="16" fill="#d8d8d8">
      <text transform="translate(578 386) rotate(-90)" textLength="103" lengthAdjust="spacingAndGlyphs" xmlSpace="preserve">XL-1  250*300</text>
      <text transform="translate(595 386) rotate(-90)" textLength="206" lengthAdjust="spacingAndGlyphs" xmlSpace="preserve">C10@100 (2)  6C22  4/2:4C22</text>
      <text transform="translate(612 386) rotate(-90)" textLength="41" lengthAdjust="spacingAndGlyphs">N4C14</text>
    </g>
    <line x1="575" y1="386.500" x2="645" y2="386.500" stroke="#fff" strokeWidth="1.500" />
    <line x1="645" y1="386.500" x2="659" y2="386.500" stroke="#f08020" strokeWidth="1.500" />
  </Svg>
);

const WinLogo = () => (
  <Svg width="16" height="16" viewBox="0 0 16 16"><path d="M0 2.200l6.500-.9v6.200H0zM7.500 1.200L16 0v7.500H7.500zM0 8.500h6.500v6.200L0 13.800zM7.500 8.500H16V16l-8.500-1.200z" fill="#fff" /></Svg>
);
const Ring = () => (
  <Svg width="20" height="20" viewBox="0 0 20 20"><circle cx="10" cy="10" r="8.500" fill="none" stroke="#e8e8e8" strokeWidth="2.200" /></Svg>
);
const Mic = () => (
  <Svg width="14" height="18" viewBox="0 0 14 18"><rect x="4.500" y="1" width="5" height="10" rx="2.500" fill="none" stroke="#888" /><path d="M2 7.500c0 6 10 6 10 0M7 13v4M4 17h6" fill="none" stroke="#888" /></Svg>
);
const T1 = () => <Svg width="24" height="24" viewBox="0 0 24 24"><g fill="#e8e8e8"><ellipse cx="7.500" cy="7" rx="5" ry="5.500" /><ellipse cx="16.500" cy="7" rx="5" ry="5.500" /><ellipse cx="7.500" cy="17" rx="5" ry="5.500" /><ellipse cx="16.500" cy="17" rx="5" ry="5.500" /></g><circle cx="12" cy="12" r="2" fill="#05090c" /></Svg>;
const T2 = () => <Svg width="22" height="22" viewBox="0 0 22 22"><path d="M18 5C14 1 5 2 3 9c-2 7 4 11 9 10 5-1 7-6 4-9-2-2-6-2-7 1-1 2 2 4 4 2" fill="none" stroke="#b8b8b8" strokeWidth="1.600" /></Svg>;
const T3 = () => <Svg width="22" height="24" viewBox="0 0 22 24"><path d="M1 12C1 4 7 1 12 1c6 0 9 4 9 10v3H7c0 5 8 6 13 2v6c-7 3-19 1-19-10zM7 9h8c0-4-7-4-8 0z" fill="#0a78d4" /></Svg>;
const T4 = () => <Svg width="20" height="24" viewBox="0 0 20 24"><path d="M1 7h18v16H1z" fill="#fff" /><path d="M6 7c0-7 8-7 8 0" fill="none" stroke="#fff" strokeWidth="1.500" /><path d="M6 11h3.500v3.500H6zM10.500 11H14v3.500h-3.500zM6 15.500h3.500V19H6zM10.500 15.500H14V19h-3.500z" fill="#111" /></Svg>;
const T5 = () => <Svg width="22" height="22" viewBox="0 0 22 22"><path d="M1 3h8l2 2h10v15H1z" fill="#f6d25e" /><path d="M5 12h12v8H5z" fill="#9ad6f4" /><path d="M8 15h6v5H8z" fill="#3a9ad8" /></Svg>;
const T6 = () => <Svg width="24" height="26" viewBox="0 0 24 26"><path d="M19 3C13-1 3 2 2 12c-1 8 6 13 13 11 6-2 8-8 6-12h-9v5h4c-1 3-6 3-8-1-2-5 3-9 9-6z" fill="#1c92e8" /></Svg>;
const T7 = () => <Svg width="24" height="28" viewBox="0 0 24 28"><rect x="1" y="1" width="22" height="26" rx="5" fill="#0f96f0" /><path d="M12 5v18M7 9c-4 0-4 5 0 5h10c4 0 4-5 0-5M9 5h6M9 23h6" fill="none" stroke="#fff" strokeWidth="2" /></Svg>;
const T8 = () => <Svg width="24" height="26" viewBox="0 0 24 26"><rect x="1" y="2" width="22" height="23" fill="#f6a818" /><rect x="4" y="5" width="14" height="17" fill="#fff4d0" /><path d="M6 9h9M6 12h9M6 15h7" stroke="#b89060" /><path d="M13 17L22 1l1.500 1L16 19z" fill="#c83a20" /></Svg>;
const T9 = () => <Svg width="24" height="26" viewBox="0 0 24 26"><ellipse cx="12" cy="13" rx="10" ry="11" fill="#8cc63e" /><ellipse cx="12" cy="13" rx="7" ry="9" fill="#fff" /><path d="M7 13h10M8 9c3-3 7-2 8 0M8 17c3 3 7 2 8 0" stroke="#58a820" strokeWidth="1.800" fill="none" /><path d="M3 5C8 0 18 0 21 3" stroke="#2a6a20" fill="none" /></Svg>;

export default function App() {
  return (
    <Page>
      <Global />
      <TitleBar>
        <Svg width="16" height="16" viewBox="0 0 24 24"><rect x="0" y="0" width="24" height="24" rx="4" fill="#0f96f0" /><path d="M12 4v16M7 8c-4 0-4 5 0 5h10c4 0 4-5 0-5" fill="none" stroke="#fff" strokeWidth="2.500" /></Svg>
        <TitleText>广联达BIM钢筋算量软件 GGJ2013 - [C:\Users\Administrator.PC-20141127NRHM\Desktop\白龙村-2016-08-25-13-27-07(2166版).GGJ12]</TitleText>
        <WinCtl><Svg width="10" height="10" viewBox="0 0 10 10"><path d="M0 5.500h10" stroke="#999" /></Svg></WinCtl>
        <WinCtl><Svg width="10" height="11" viewBox="0 0 10 11"><path d="M.5 2.500h7v8h-7zM2.500 2.500v-2h7v8h-2" fill="none" stroke="#999" /></Svg></WinCtl>
        <WinCtl><Svg width="11" height="11" viewBox="0 0 11 11"><path d="M.5.500l10 10M10.500.500l-10 10" stroke="#999" /></Svg></WinCtl>
      </TitleBar>
      <Badge>64</Badge>
      <MenuBar>
        {menus.map(m => <MenuItem key={m}>{m}</MenuItem>)}
        <Tool><Ico n="change" /><span>新建变更</span><Caret /></Tool>
        <Tool><Ico n="robot" /><span>广小二</span></Tool>
        <Tip>如何快速布置自定义范..</Tip>
        <UserBox>
          <Tool $ml={-2}><Ico n="user" /><span>13907298339</span><Caret /></Tool>
          <Tool $ml={4}><span>造价豆:0</span><Ico n="bell" /></Tool>
          <More>»</More>
        </UserBox>
      </MenuBar>
      <TopBar>
        <Bar $w={151} $h={26}>
          <Tool $h={26} $ml={.5}><Ico n="new" /></Tool>
          <Tool $h={26} $ml={1}><Ico n="open" /><Caret /></Tool>
          <Tool $h={26}><Ico n="save" /></Tool>
          <Sep $l={2.500} $r={2.500} />
          <Tool $h={26}><Ico n="undo" /><Caret /></Tool>
          <More>»</More>
        </Bar>
        <Bar $w={548} $h={26} $ml={2}>
          <Tool $h={26} $ml={1}><Ico n="define" /><span>定义</span></Tool>
          <Tool $h={26}><SigmaGlyph>Σ</SigmaGlyph><span>汇总计算</span></Tool>
          <ToolRun items={top2} h={26} />
          <More>»</More>
        </Bar>
        <Bar $h={26} $ml={2}>
          <ToolRun items={top3} h={26} />
          <More>»</More>
        </Bar>
      </TopBar>
      <Body>
        <Left>
          <PanelHead><HeadLabel>模块导航栏</HeadLabel><Ico n="pin" s={14} /><Ico n="x" s={16} /></PanelHead>
          <NavBtn>工程设置</NavBtn>
          <NavBtn>绘图输入</NavBtn>
          <Tree>
            <TreeTools><Ico n="addT" /><Ico n="delT" /></TreeTools>
            <TreeFrame>
              <TreeBody>
                {tree.map((g, gi) => (
                  <React.Fragment key={g.t}>
                    <TreeRow $first={gi === 0}>
                      <Chev><ChevSvg d={g.open ? 'd' : 'r'} c={g.open ? '#444' : '#aaa'} /></Chev>
                      <Dots $w={5} />
                      <TreeLabel><Ico n={g.open ? 'folderOpen' : 'folder'} /><span>{g.t}</span></TreeLabel>
                    </TreeRow>
                    {g.kids.map((c, idx) => (
                      <TreeRow key={c.t + idx} $child $last={idx === g.kids.length - 1}>
                        <Dots $w={11} />
                        <TreeLabel $sel={c.sel}><Ico n={c.i!} /><span>{c.t}{c.k && <Key>({c.k})</Key>}</span></TreeLabel>
                      </TreeRow>
                    ))}
                  </React.Fragment>
                ))}
              </TreeBody>
              <VBar><ChevSvg d="u" /><VThumb /><Dn><ChevSvg d="d" /></Dn></VBar>
              <HBar><ChevSvg d="l" /><HTrack><HThumb /></HTrack><ChevSvg d="r" /></HBar>
              <HCorner />
            </TreeFrame>
          </Tree>
          <NavBtn $mt={1}>单构件输入</NavBtn>
          <NavBtn $mt={0}>报表预览</NavBtn>
        </Left>
        <Right>
          <Bar $w={791} $ml={2}>
            <Grip />
            <ToolRun items={row1} />
          </Bar>
          <Rows>
            <Bar $w={637} $ml={2}>
              <Grip />
              {['第3层', '梁', '梁', 'XL-1', '分层1'].map((c, i) => <Combo $w={i === 0 ? 60 : 72} key={i}><span>{c}</span><Caret as="i" /></Combo>)}
              <Sep $l={3} $r={1} />
              <ToolRun items={row2a} />
            </Bar>
            <Bar $w={422} $ml={3}>
              <Grip />
              <ToolRun items={row2b} />
            </Bar>
          </Rows>
          <Rows>
            <Bar $w={1159} $h={27} $ml={2}>
              <Grip />
              <ToolRun items={row3a} />
              <Combo $w={58}><span /><Caret as="i" /></Combo>
              <ToolRun items={row3b} />
              <More>»</More>
            </Bar>
            <Bar $h={27} $ml={3}><Grip /></Bar>
          </Rows>
          <Canvas>
            <Cad />
            <CoordBox $x={572} $w={73}>30385.104</CoordBox>
            <CoordBox $x={649} $w={65} $dark>3965.131</CoordBox>
          </Canvas>
          <SnapWrap>
            <Bar $w={905} $h={27} $ml={2}>
              <Grip />
              <ToolRun items={snap1} h={24} />
              <Grip />
              <ToolRun items={snap2} h={24} />
              <Sep $l={7} $r={2} />
              <Combo $w={60}><span>不偏移</span><Caret as="i" /></Combo>
              <Sep $l={1} $r={4} />
              <Muted $w={20}>X=</Muted>
              <Num $w={57}>0<Spinner /></Num>
              <Muted $w={26} $ml={3}>mm</Muted>
              <Muted $w={18}>Y=</Muted>
              <Num $w={57}>0<Spinner /></Num>
              <Muted $w={20} $ml={3}>mm</Muted>
              <Sep $l={4} $r={3} />
              <Check />
              <span>旋转</span>
              <Num $w={68} $ml={4}><NumOff>0.000</NumOff><Spinner /></Num>
              <Muted $ml={4}>°</Muted>
            </Bar>
          </SnapWrap>
          <Lower>
            <GripCol><CloseBox><Ico n="redx" s={10} /></CloseBox></GripCol>
            <GridArea>
              <GridTools>
                <Tool><Ico n="doc" /><span>复制跨数据</span></Tool>
                <Tool $dis><Ico n="paste" /><span>粘贴跨数据</span></Tool>
                <Tool $dis $ml={2}><span>输入当前列数据</span></Tool>
                <Tool $dis $ml={3}><span>删除当前列数据</span></Tool>
                <Tool $ml={3}><span>页面设置</span></Tool>
                <Tool $ml={3}><span>调换起始跨</span></Tool>
                <Tool $ml={3}><span>悬臂钢筋代号</span></Tool>
              </GridTools>
              <GridWrap>
                <TableBox>
                  <Table>
                    <colgroup>{colW.map((w, i) => <Col key={i} $w={w} />)}</colgroup>
                    <thead>
                      <tr>
                        <Th rowSpan={2} />
                        <Th rowSpan={2} $hi>跨号</Th>
                        <Th colSpan={2}>标高<Key>(m)</Key></Th>
                        <Th colSpan={7}>构件尺寸<Key>(mm)</Key></Th>
                        <Th rowSpan={2}>上通长筋</Th>
                        <Th colSpan={3}>上部钢筋</Th>
                        <Th colSpan={2}>下部钢筋</Th>
                        <Th colSpan={2} $pl={102}>侧面钢筋</Th>
                      </tr>
                      <tr>
                        <Th>起点标高</Th><Th>终点标高</Th>
                        <Th><Key>A1</Key></Th><Th><Key>A2</Key></Th><Th><Key>A3</Key></Th><Th><Key>A4</Key></Th>
                        <Th>跨长</Th><Th>截面<Key>(B*H)</Key></Th><Th>距左边线距离</Th>
                        <Th>左支座钢筋</Th><Th>跨中钢筋</Th><Th>右支座钢筋</Th>
                        <Th>下通长筋</Th><Th>下部钢筋</Th>
                        <Th>侧面通长筋</Th><Th>侧面原位标注</Th>
                      </tr>
                    </thead>
                    <tbody>
                      <tr>
                        <Td $num>1</Td>
                        <CurTd>0<Handle /></CurTd>
                        {row.map((v, i) => <Td key={i}>{v}</Td>)}
                      </tr>
                    </tbody>
                  </Table>
                </TableBox>
                <GridScroll><GridThumb /><ChevSvg d="l" /><ChevSvg d="r" /></GridScroll>
              </GridWrap>
            </GridArea>
          </Lower>
        </Right>
      </Body>
      <Status>
        <StatusCell $w={148}>X=30385 Y=3965</StatusCell>
        <StatusCell $w={78}><Cjk>层高:</Cjk>2.8m</StatusCell>
        <StatusCell $w={98}><Cjk>底标高:</Cjk>7.47m</StatusCell>
        <StatusCell $w={48}>1(3)</StatusCell>
        <StatusCell><Cjk>按鼠标左键选择打断点或</Cjk>Shift+<Cjk>左键指定打断点，支持多选，按右键确认选择</Cjk></StatusCell>
        <StatusCell $w={70}>542.8 FPS</StatusCell>
      </Status>
      <Taskbar>
        <StartBtn><WinLogo /></StartBtn>
        <Search><Ring /><SearchText>在这里输入你要搜索的内容</SearchText><Mic /></Search>
        <TaskItem><T1 /></TaskItem>
        <TaskItem><T2 /></TaskItem>
        <TaskItem><T3 /></TaskItem>
        <TaskItem><T4 /></TaskItem>
        <TaskItem><T5 /></TaskItem>
        <TaskItem $open><T6 /></TaskItem>
        <TaskItem $open $act><T7 /></TaskItem>
        <TaskItem $open><T8 /></TaskItem>
        <TaskItem $open><T9 /></TaskItem>
        <Tray>
          <CpuBox>8%<br />CPU使用</CpuBox>
          <TrayIcon $w={24}><Svg width="14" height="9" viewBox="0 0 14 9"><path d="M1 8l6-6 6 6" fill="none" stroke="#fff" strokeWidth="1.300" /></Svg></TrayIcon>
          <TrayIcon $w={26}><Svg width="18" height="16" viewBox="0 0 18 16"><path d="M3 0v4M6 0v4M2 4h5v2H2z" stroke="#fff" fill="#fff" /><rect x="2" y="6" width="13" height="8" fill="#aaa" stroke="#fff" /><path d="M16 8h1.500v4H16z" fill="#fff" /></Svg></TrayIcon>
          <TrayIcon $w={24}><Svg width="16" height="16" viewBox="0 0 16 16"><path d="M1 14A13 13 0 0 1 14 1M4 14A10 10 0 0 1 14 4M7 14a7 7 0 0 1 7-7" fill="none" stroke="#bbb" strokeWidth="1.200" strokeDasharray="2 1" /><circle cx="10" cy="12" r="1.500" fill="#fff" /></Svg></TrayIcon>
          <TrayIcon $w={20}><Svg width="16" height="14" viewBox="0 0 16 14"><path d="M1 5h3l4-4v12L4 9H1z" fill="none" stroke="#fff" /><path d="M10 4c1.500 2 1.500 4 0 6M12 2c3 3 3 7 0 10" fill="none" stroke="#ccc" /></Svg></TrayIcon>
          <TrayIcon $w={36}><Svg width="23" height="14" viewBox="0 0 23 14"><rect x=".5" y=".5" width="22" height="13" fill="none" stroke="#fff" /><path d="M3 4h17M3 7h17" stroke="#fff" strokeDasharray="1.500 1" /><path d="M6 10.500h11" stroke="#fff" /></Svg></TrayIcon>
          <TrayIcon $w={20}><ZhText>中</ZhText></TrayIcon>
          <TrayIcon $w={38}><Svg width="16" height="18" viewBox="0 0 16 18"><path d="M3 1h11l1 15-12 1.500L1 2z" fill="#f0502a" /><path d="M11 5C7 4 5 6 6 8c1 2 5 1 5 3.500S7 14 4.500 13" fill="none" stroke="#fff" strokeWidth="2" /></Svg></TrayIcon>
          <Clock>10:23<br />2017/9/8</Clock>
          <Notify>
            <Svg width="16" height="14" viewBox="0 0 16 14"><path d="M0 0h16v14H0z" fill="#fff" /><path d="M3 4h10M3 7h10M3 10h10" stroke="#05090c" /></Svg>
            <NotifyBadge>20</NotifyBadge>
          </Notify>
        </Tray>
      </Taskbar>
      <Dialog>
        <DlgTitle>确认</DlgTitle>
        <DlgMain>
          <Svg width="30" height="30" viewBox="0 0 30 30"><circle cx="15" cy="15" r="15" fill="#0a64b8" /><QMark x="15" y="22" textAnchor="middle">?</QMark></Svg>
          <span>是否在指定位置打断</span>
        </DlgMain>
        <DlgFoot>
          <DlgBtn $def>是(Y)</DlgBtn>
          <DlgBtn>否(N)</DlgBtn>
        </DlgFoot>
      </Dialog>
    </Page>
  );
}
